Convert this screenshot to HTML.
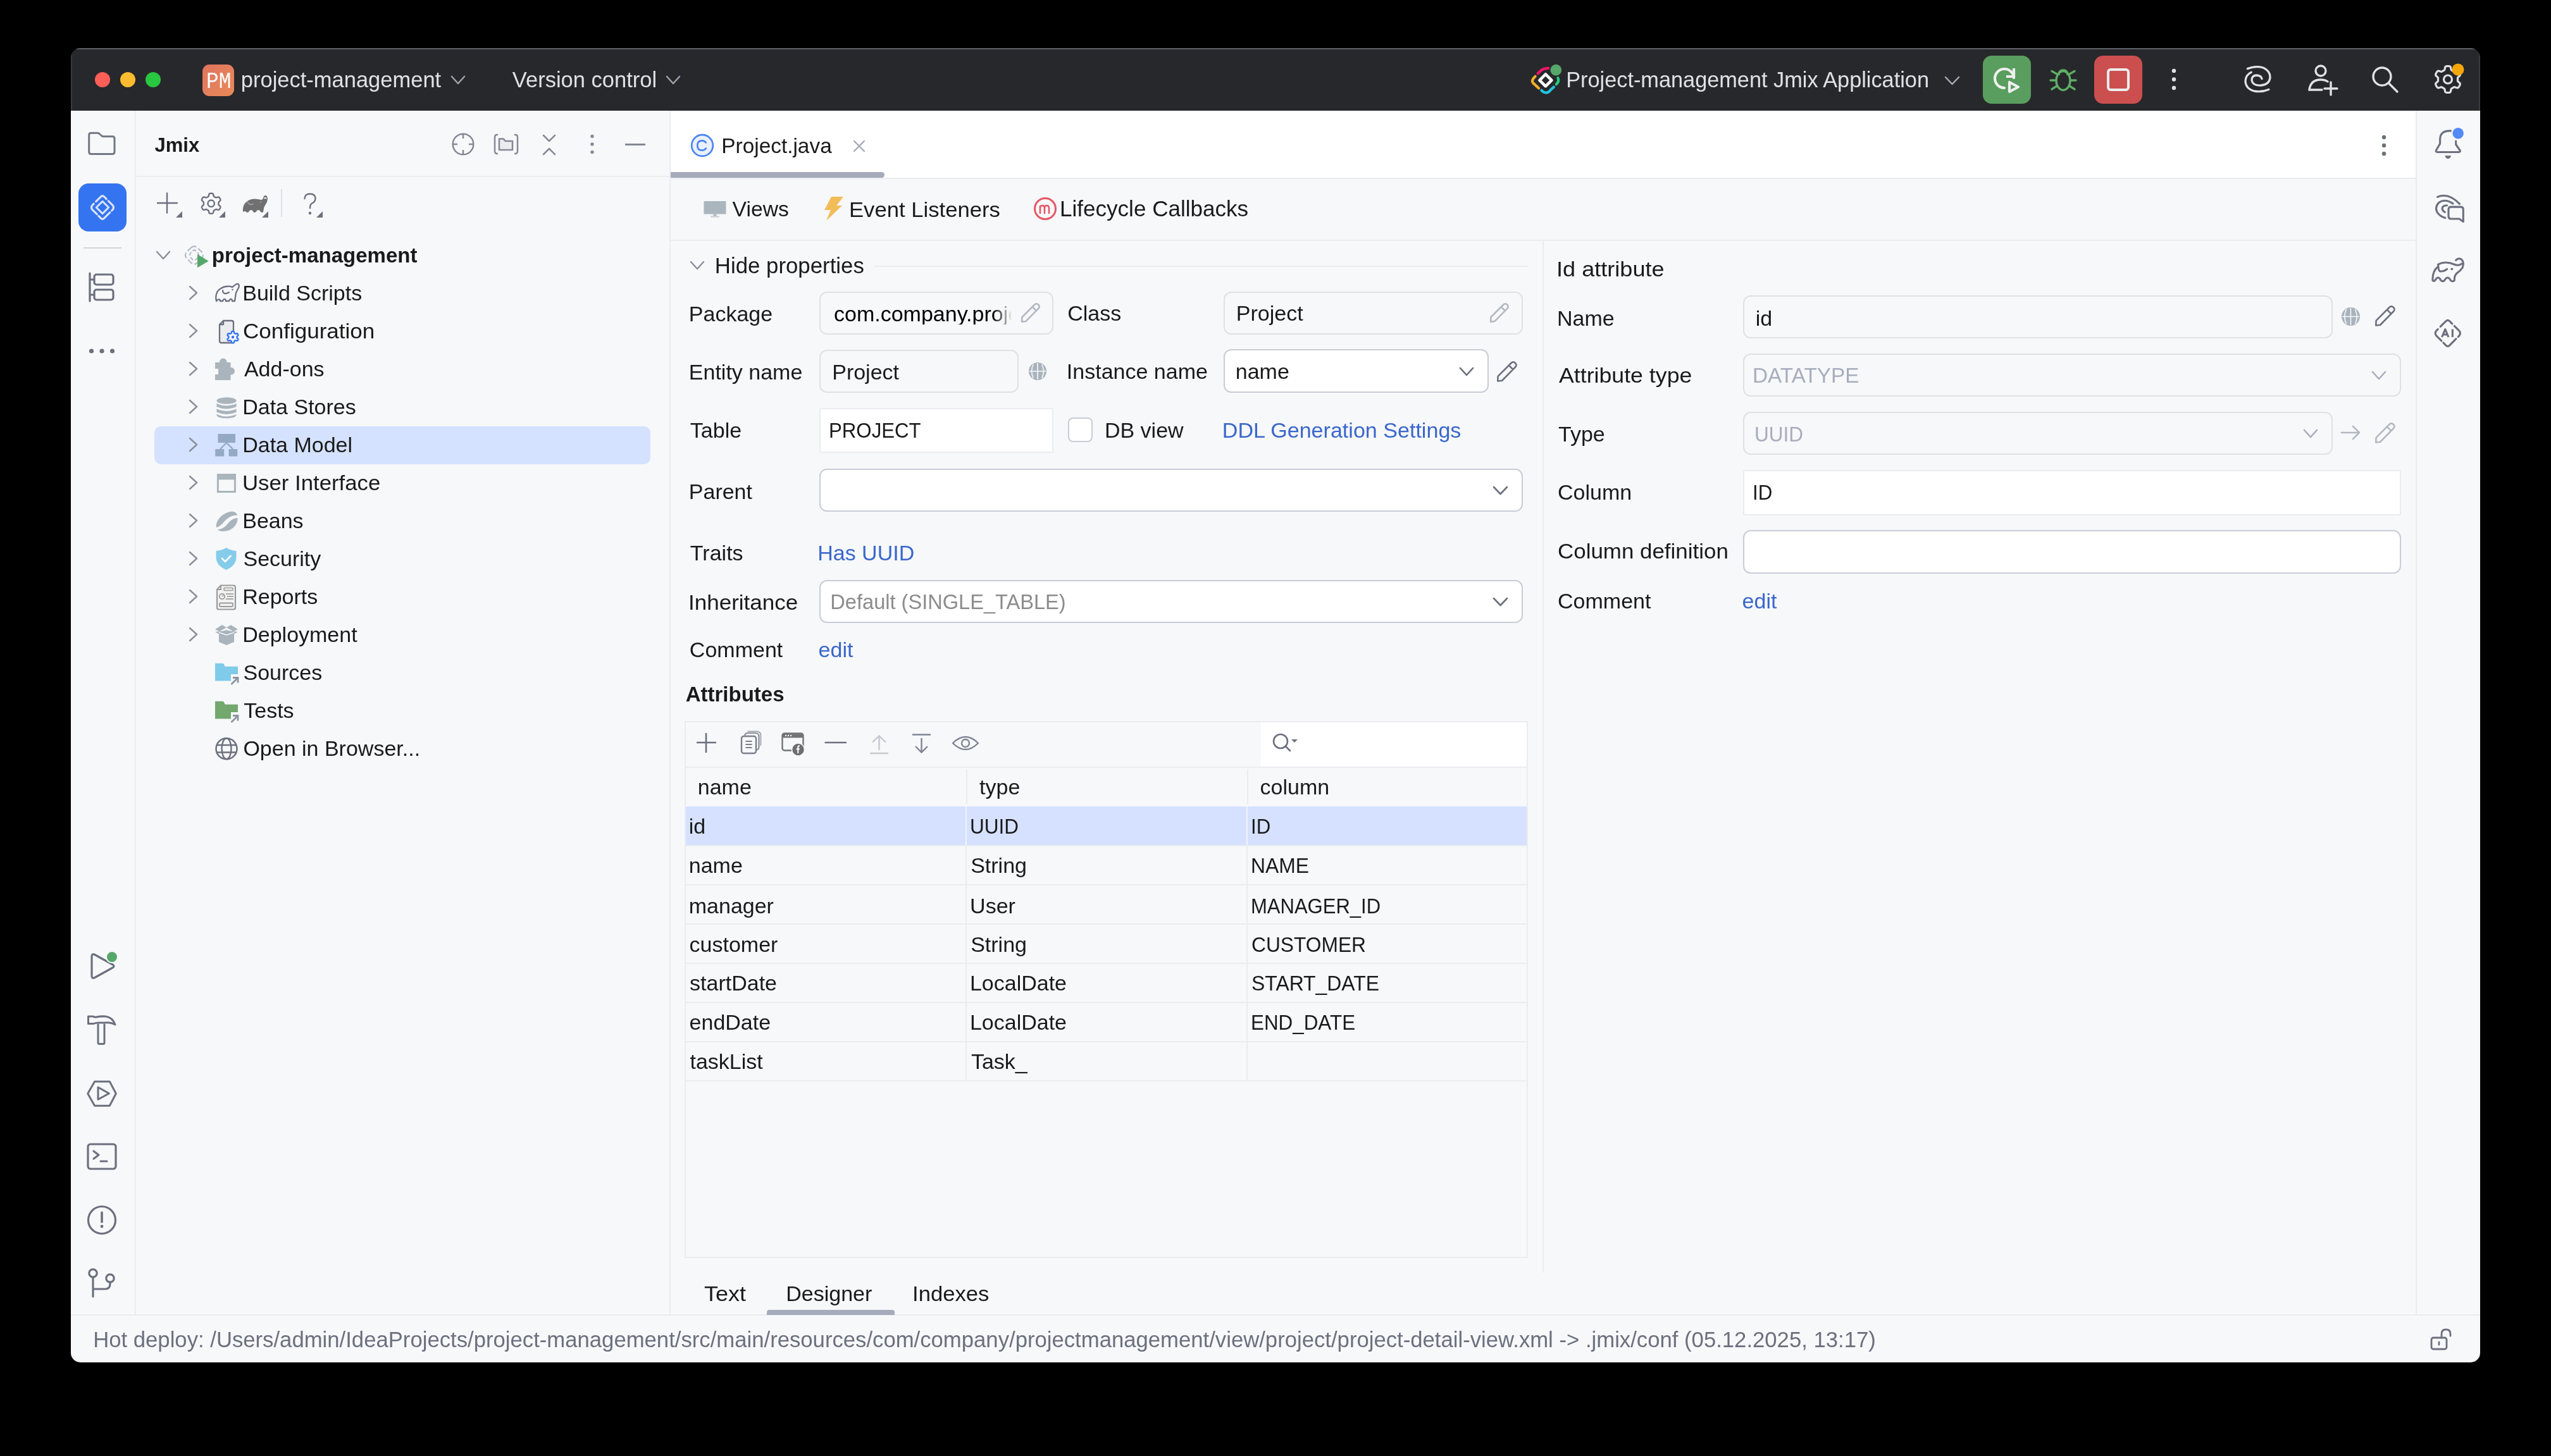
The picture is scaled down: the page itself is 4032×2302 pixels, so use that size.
<!DOCTYPE html>
<html><head><meta charset="utf-8"><style>
html,body{margin:0;padding:0;background:#000;width:4032px;height:2302px;overflow:hidden}
#w{position:absolute;left:0;top:0;width:4032px;height:2302px;clip-path:inset(76px 112px 148px 112px round 15px);will-change:transform}
#w div{position:absolute}
.t{white-space:nowrap;font-family:"Liberation Sans", sans-serif}
</style></head><body><div id="w">
<div style="left:112px;top:76px;width:3808px;height:2078px;background:#F7F8FA;"></div>
<div style="left:112px;top:76px;width:3808px;height:99px;background:#27282C;"></div>
<div style="left:112px;top:76px;width:3808px;height:2px;background:#606166;"></div>
<div style="left:112px;top:76px;width:2px;height:99px;background:#3A3B40;"></div>
<div style="left:3918px;top:76px;width:2px;height:99px;background:#3A3B40;"></div>
<div style="left:213px;top:175px;width:2px;height:1904px;background:#EBECF0;"></div>
<div style="left:215px;top:278px;width:843px;height:2px;background:#EBECF0;"></div>
<div style="left:1058px;top:175px;width:2px;height:1904px;background:#EBECF0;"></div>
<div style="left:3818px;top:175px;width:2px;height:1904px;background:#EBECF0;"></div>
<div style="left:1060px;top:175px;width:2758px;height:106px;background:#FFFFFF;"></div>
<div style="left:1060px;top:281px;width:2758px;height:2px;background:#EBECF0;"></div>
<div style="left:1060px;top:379px;width:2758px;height:2px;background:#EBECF0;"></div>
<div style="left:112px;top:2078px;width:3808px;height:2px;background:#EBECF0;"></div>
<div style="left:2438px;top:381px;width:2px;height:1631px;background:#EBECF0;"></div>
<svg style="position:absolute;left:148px;top:112px;" width="108" height="28" viewBox="0 0 108 28" fill="none"><circle cx="14" cy="14" r="12" fill="#FF5F57"/><circle cx="54" cy="14" r="12" fill="#FEBC2E"/><circle cx="94" cy="14" r="12" fill="#28C840"/></svg>
<div style="left:320px;top:102px;width:50px;height:50px;border-radius:11px;background:linear-gradient(135deg,#E0735F,#E88B58)"></div>
<div class="t" style="left:325.5px;top:111.5px;font-size:36px;line-height:35px;color:#FFFFFF;font-family:'Liberation Mono',monospace;transform:scaleX(0.91);transform-origin:0 0">PM</div>
<div class="t" style="left:380.79px;top:108.80px;font-size:34.5px;line-height:34.5px;color:#DFE1E5;font-weight:400;">project-management</div>
<svg style="position:absolute;left:712px;top:119px;" width="24" height="15" viewBox="0 0 24 15" fill="none"><path d="M2 2 L12.0 13 L22 2" stroke="#9DA0A8" stroke-width="2.6" stroke-linecap="round" stroke-linejoin="round"/></svg>
<div class="t" style="left:809.86px;top:108.80px;font-size:34.5px;line-height:34.5px;color:#DFE1E5;font-weight:400;">Version control</div>
<svg style="position:absolute;left:1052px;top:119px;" width="24" height="15" viewBox="0 0 24 15" fill="none"><path d="M2 2 L12.0 13 L22 2" stroke="#9DA0A8" stroke-width="2.6" stroke-linecap="round" stroke-linejoin="round"/></svg>
<svg style="position:absolute;left:2418px;top:100px;" width="52" height="52" viewBox="0 0 52 52" fill="none">
<path d="M24.9 17.3 L34.4 26.8 L24.9 36.3 L15.4 26.8 Z" stroke="#FFFFFF" stroke-width="4.6" stroke-linejoin="round"/>
<path d="M12.7 16.2 Q18 10.5 21.8 9 Q26 7.8 29.3 7.8" stroke="#F0176A" stroke-width="4.3" stroke-linecap="round"/>
<path d="M8.6 20.8 Q3.5 25 4 29 Q5 31.5 7 33 L14.1 39.5" stroke="#F4AF2A" stroke-width="4.3" stroke-linecap="round"/>
<path d="M18.4 42.9 Q22 47 27 46.5 Q30 46 33 42 L37.9 37.6" stroke="#22C3DB" stroke-width="4.3" stroke-linecap="round"/>
<path d="M44.4 23.2 Q47 28 41.8 33.3" stroke="#25CC7B" stroke-width="4.3" stroke-linecap="round"/>
<circle cx="41.3" cy="10.7" r="8.9" fill="#57A66A"/></svg>
<div class="t" style="left:2475.19px;top:108.97px;font-size:34.3px;line-height:34.3px;color:#DFE1E5;font-weight:400;">Project-management Jmix Application</div>
<svg style="position:absolute;left:3073px;top:120px;" width="25" height="15" viewBox="0 0 25 15" fill="none"><path d="M2 2 L12.5 13 L23 2" stroke="#A9ACB3" stroke-width="2.5" stroke-linecap="round" stroke-linejoin="round"/></svg>
<div style="left:3134px;top:88px;width:76px;height:76px;border-radius:14px;background:#599E5E"></div>
<svg style="position:absolute;left:3134px;top:88px;" width="76" height="76" viewBox="0 0 76 76" fill="none">
<path d="M34 51 A15 15 0 1 1 49 35" stroke="#EFEFEF" stroke-width="4.2" fill="none" stroke-linecap="round" transform="rotate(0)"/>
<path d="M49 20 V33 H37" stroke="#EFEFEF" stroke-width="4.2" fill="none" stroke-linejoin="miter"/>
<path d="M42 42 L42 57 L56 49.5 Z" stroke="#EFEFEF" stroke-width="4.2" fill="none" stroke-linejoin="round"/></svg>
<svg style="position:absolute;left:3238px;top:104px;" width="46" height="42" viewBox="0 0 46 42" fill="none">
<path d="M23 7 Q30 7 30 15 M23 7 Q16 7 16 15" stroke="#5FAD65" stroke-width="3.4"/>
<ellipse cx="23" cy="23.5" rx="11" ry="15" stroke="#5FAD65" stroke-width="3.4"/>
<path d="M13 13 L5 8.5 M12 23 H3 M13 32 L5 37 M33 13 L41 8.5 M34 23 H43 M33 32 L41 37" stroke="#5FAD65" stroke-width="3.4" stroke-linecap="round"/></svg>
<div style="left:3310px;top:88px;width:76px;height:76px;border-radius:14px;background:#CB4F4F"></div>
<div style="left:3330px;top:108px;width:28px;height:28px;border:4px solid #EDEDED;border-radius:6px"></div>
<svg style="position:absolute;left:3428px;top:104px;" width="16" height="44" viewBox="0 0 16 44" fill="none"><circle cx="8" cy="8" r="3.2" fill="#DFE1E5"/><circle cx="8" cy="21.5" r="3.2" fill="#DFE1E5"/><circle cx="8" cy="35" r="3.2" fill="#DFE1E5"/></svg>
<svg style="position:absolute;left:3545px;top:104px;" width="48" height="44" viewBox="0 0 48 44" fill="none">
<path d="M7.4 4.6 Q20 -0.5 32 3 Q43.5 8 43 19 Q41.5 30 28 31 Q15.5 31.5 14 23 Q14 15 22 15 Q29 15.5 30 20.5" stroke="#DFE1E5" stroke-width="3.3" stroke-linecap="round" fill="none"/>
<path d="M40.9 37.4 Q30 42 18 40 Q4.5 36.5 4 24 Q4.5 14.5 13.3 10.3" stroke="#DFE1E5" stroke-width="3.3" stroke-linecap="round" fill="none"/></svg>
<svg style="position:absolute;left:3646px;top:100px;" width="52" height="52" viewBox="0 0 52 52" fill="none">
<circle cx="22" cy="12" r="8" stroke="#DFE1E5" stroke-width="3.4"/>
<path d="M4 42 Q6 26 22 26 Q29 26 33 29" stroke="#DFE1E5" stroke-width="3.4" stroke-linecap="round"/>
<path d="M4 42 H24 M38 30 V50 M28 40 H48" stroke="#DFE1E5" stroke-width="3.4" stroke-linecap="round"/></svg>
<svg style="position:absolute;left:3746px;top:102px;" width="48" height="48" viewBox="0 0 48 48" fill="none"><circle cx="19" cy="19" r="14" stroke="#DFE1E5" stroke-width="3.4"/><path d="M29.5 29.5 L43 43" stroke="#DFE1E5" stroke-width="3.4" stroke-linecap="round"/></svg>
<svg style="position:absolute;left:3844px;top:100px;" width="50" height="50" viewBox="0 0 50 50" fill="none"><path d="M40.50 25.50 L40.50 25.91 L40.49 26.31 L40.48 26.72 L40.47 27.13 L40.49 27.54 L40.55 27.96 L40.72 28.41 L41.08 28.92 L41.74 29.52 L42.63 30.22 L43.49 30.98 L44.08 31.70 L44.34 32.35 L44.38 32.94 L44.29 33.49 L44.13 34.02 L43.93 34.53 L43.70 35.03 L43.45 35.52 L43.19 36.00 L42.90 36.47 L42.60 36.93 L42.28 37.38 L41.94 37.81 L41.56 38.21 L41.13 38.56 L40.60 38.82 L39.91 38.92 L38.99 38.78 L37.90 38.40 L36.85 37.99 L36.00 37.72 L35.38 37.65 L34.91 37.73 L34.51 37.89 L34.15 38.09 L33.79 38.30 L33.45 38.51 L33.10 38.72 L32.75 38.92 L32.40 39.12 L32.04 39.32 L31.68 39.51 L31.33 39.71 L30.98 39.93 L30.64 40.20 L30.34 40.57 L30.08 41.14 L29.89 42.00 L29.72 43.13 L29.50 44.25 L29.17 45.12 L28.74 45.67 L28.25 46.00 L27.73 46.20 L27.19 46.33 L26.65 46.41 L26.10 46.46 L25.55 46.49 L25.00 46.50 L24.45 46.49 L23.90 46.46 L23.35 46.41 L22.81 46.33 L22.27 46.20 L21.75 46.00 L21.26 45.67 L20.83 45.12 L20.50 44.25 L20.28 43.13 L20.11 42.00 L19.92 41.14 L19.66 40.57 L19.36 40.20 L19.02 39.93 L18.67 39.71 L18.32 39.51 L17.96 39.32 L17.60 39.12 L17.25 38.92 L16.90 38.72 L16.55 38.51 L16.21 38.30 L15.85 38.09 L15.49 37.89 L15.09 37.73 L14.62 37.65 L14.00 37.72 L13.15 37.99 L12.10 38.40 L11.01 38.78 L10.09 38.92 L9.40 38.82 L8.87 38.56 L8.44 38.21 L8.06 37.81 L7.72 37.38 L7.40 36.93 L7.10 36.47 L6.81 36.00 L6.55 35.52 L6.30 35.03 L6.07 34.53 L5.87 34.02 L5.71 33.49 L5.62 32.94 L5.66 32.35 L5.92 31.70 L6.51 30.98 L7.37 30.22 L8.26 29.52 L8.92 28.92 L9.28 28.41 L9.45 27.96 L9.51 27.54 L9.53 27.13 L9.52 26.72 L9.51 26.31 L9.50 25.91 L9.50 25.50 L9.50 25.09 L9.51 24.69 L9.52 24.28 L9.53 23.87 L9.51 23.46 L9.45 23.04 L9.28 22.59 L8.92 22.08 L8.26 21.48 L7.37 20.78 L6.51 20.02 L5.92 19.30 L5.66 18.65 L5.62 18.06 L5.71 17.51 L5.87 16.98 L6.07 16.47 L6.30 15.97 L6.55 15.48 L6.81 15.00 L7.10 14.53 L7.40 14.07 L7.72 13.62 L8.06 13.19 L8.44 12.79 L8.87 12.44 L9.40 12.18 L10.09 12.08 L11.01 12.22 L12.10 12.60 L13.15 13.01 L14.00 13.28 L14.62 13.35 L15.09 13.27 L15.49 13.11 L15.85 12.91 L16.21 12.70 L16.55 12.49 L16.90 12.28 L17.25 12.08 L17.60 11.88 L17.96 11.68 L18.32 11.49 L18.67 11.29 L19.02 11.07 L19.36 10.80 L19.66 10.43 L19.92 9.86 L20.11 9.00 L20.28 7.87 L20.50 6.75 L20.83 5.88 L21.26 5.33 L21.75 5.00 L22.27 4.80 L22.81 4.67 L23.35 4.59 L23.90 4.54 L24.45 4.51 L25.00 4.50 L25.55 4.51 L26.10 4.54 L26.65 4.59 L27.19 4.67 L27.73 4.80 L28.25 5.00 L28.74 5.33 L29.17 5.88 L29.50 6.75 L29.72 7.87 L29.89 9.00 L30.08 9.86 L30.34 10.43 L30.64 10.80 L30.98 11.07 L31.33 11.29 L31.68 11.49 L32.04 11.68 L32.40 11.88 L32.75 12.08 L33.10 12.28 L33.45 12.49 L33.79 12.70 L34.15 12.91 L34.51 13.11 L34.91 13.27 L35.38 13.35 L36.00 13.28 L36.85 13.01 L37.90 12.60 L38.99 12.22 L39.91 12.08 L40.60 12.18 L41.13 12.44 L41.56 12.79 L41.94 13.19 L42.28 13.62 L42.60 14.07 L42.90 14.53 L43.19 15.00 L43.45 15.48 L43.70 15.97 L43.93 16.47 L44.13 16.98 L44.29 17.51 L44.38 18.06 L44.34 18.65 L44.08 19.30 L43.49 20.02 L42.63 20.78 L41.74 21.48 L41.08 22.08 L40.72 22.59 L40.55 23.04 L40.49 23.46 L40.47 23.87 L40.48 24.28 L40.49 24.69 L40.50 25.09 Z" stroke="#DFE1E5" stroke-width="3.2" stroke-linejoin="round"/><circle cx="25" cy="25.5" r="6.5" stroke="#DFE1E5" stroke-width="3.2"/></svg>
<svg style="position:absolute;left:3874px;top:99px;" width="22" height="22" viewBox="0 0 22 22" fill="none"><circle cx="11" cy="11" r="9.5" fill="#F5A70A"/></svg>
<svg style="position:absolute;left:136px;top:206px;" width="50" height="42" viewBox="0 0 50 42" fill="none"><path d="M4.7 7.5 Q4.7 4.2 8 4.2 H18 Q19.5 4.2 20.5 5 L25 9 Q26 9.8 27.5 9.8 H41.7 Q45 9.8 45 13 V34.2 Q45 37.5 41.7 37.5 H8 Q4.7 37.5 4.7 34.2 Z" stroke="#727784" stroke-width="3" stroke-linejoin="round"/></svg>
<div style="left:124px;top:290px;width:76px;height:76px;border-radius:16px;background:#3574F0"></div>
<svg style="position:absolute;left:124px;top:290px;" width="76" height="76" viewBox="0 0 76 76" fill="none">
<path d="M38 28.3 L47.7 38 L38 47.7 L28.3 38 Z" stroke="#D9E4FD" stroke-width="3" stroke-linejoin="round"/>
<path transform="translate(38 38) scale(0.89) translate(-23.8 -24.9)" d="M12.2 14.4 L21 5.7 Q23.8 3 26.6 5.7 L30.8 9.9 M34.3 13.4 L42 21.1 Q44.8 24.9 42 28.7 L40.2 30.5 M37 33.7 L26.6 44.1 Q23.8 46.9 21 44.1 L16.8 39.9 M13.9 36.9 L5.6 28.7 Q2.8 24.9 5.6 21.1 L8.3 18.4" stroke="#D9E4FD" stroke-width="3.5" stroke-linecap="round" stroke-linejoin="round"/></svg>
<div style="left:132px;top:391px;width:60px;height:2px;background:#D3D5DB;"></div>
<svg style="position:absolute;left:136px;top:428px;" width="50" height="54" viewBox="0 0 50 54" fill="none">
<path d="M6 4 V48" stroke="#6C707E" stroke-width="3.2" stroke-linecap="round"/>
<path d="M6 14 H13 M6 38 H13" stroke="#6C707E" stroke-width="3.2"/>
<rect x="13" y="6" width="30" height="16" rx="3.5" stroke="#6C707E" stroke-width="3.2"/>
<rect x="13" y="30" width="30" height="16" rx="3.5" stroke="#6C707E" stroke-width="3.2"/></svg>
<svg style="position:absolute;left:136px;top:548px;" width="50" height="14" viewBox="0 0 50 14" fill="none"><circle cx="8.5" cy="7" r="3.6" fill="#6C707E"/><circle cx="25" cy="7" r="3.6" fill="#6C707E"/><circle cx="41.5" cy="7" r="3.6" fill="#6C707E"/></svg>
<svg style="position:absolute;left:136px;top:1500px;" width="52" height="54" viewBox="0 0 52 54" fill="none"><path d="M9 12 Q9 7 14 9.5 L42 25 Q46 27.5 42 30 L14 45.5 Q9 48 9 43 Z" stroke="#6C707E" stroke-width="3.2" stroke-linejoin="round"/><circle cx="41" cy="13" r="9" fill="#55A76A" stroke="#F7F8FA" stroke-width="2"/></svg>
<svg style="position:absolute;left:134px;top:1600px;" width="52" height="56" viewBox="0 0 52 56" fill="none"><path d="M5.5 7 H13 Q15 8.5 18 8 Q25 6.5 33 7 Q44 8.5 48 20 Q41 16 31 17 H22 Q17 17 14 18.5 H5.5 Z" stroke="#6C707E" stroke-width="3" stroke-linejoin="round"/><path d="M21 18.5 V48.5 Q21 50.5 23 50.5 H29 Q31 50.5 31 48.5 V18.5" stroke="#6C707E" stroke-width="3" stroke-linejoin="round"/></svg>
<svg style="position:absolute;left:134px;top:1704px;" width="54" height="50" viewBox="0 0 54 50" fill="none"><path d="M15.6 5.9 H39.3 L49.3 25 L39.3 44.2 H15.6 L4.7 25 Z" stroke="#6C707E" stroke-width="3" stroke-linejoin="round"/><path d="M21 15 V34.2 L38.4 24.7 Z" stroke="#6C707E" stroke-width="3" stroke-linejoin="round"/></svg>
<svg style="position:absolute;left:136px;top:1806px;" width="50" height="46" viewBox="0 0 50 46" fill="none"><rect x="3" y="3" width="44" height="39" rx="4" stroke="#6C707E" stroke-width="3.2"/><path d="M12 14 L20 20 L12 26 M23 30 H33" stroke="#6C707E" stroke-width="3.2" stroke-linecap="round" stroke-linejoin="round"/></svg>
<svg style="position:absolute;left:136px;top:1904px;" width="50" height="50" viewBox="0 0 50 50" fill="none"><circle cx="25" cy="25" r="21.5" stroke="#6C707E" stroke-width="3.2"/><path d="M25 13 V28" stroke="#6C707E" stroke-width="3.6" stroke-linecap="round"/><circle cx="25" cy="35" r="2.4" fill="#6C707E"/></svg>
<svg style="position:absolute;left:136px;top:2004px;" width="50" height="50" viewBox="0 0 50 50" fill="none"><circle cx="11" cy="9" r="6.2" stroke="#6C707E" stroke-width="3.2"/><circle cx="38" cy="17" r="6.2" stroke="#6C707E" stroke-width="3.2"/><path d="M11 15.5 V46 M11 34 H30 Q38 34 38 26 V23" stroke="#6C707E" stroke-width="3.2" stroke-linecap="round"/></svg>
<div class="t" style="left:244.53px;top:213.76px;font-size:31px;line-height:31px;color:#1A1A1A;font-weight:700;">Jmix</div>
<svg style="position:absolute;left:712px;top:208px;" width="40" height="40" viewBox="0 0 40 40" fill="none"><circle cx="20" cy="20" r="16.3" stroke="#858995" stroke-width="2.5"/><path d="M20 3.5 V11 M20 29 V36.5 M3.5 20 H11 M29 20 H36.5" stroke="#858995" stroke-width="2.5"/></svg>
<svg style="position:absolute;left:779px;top:210px;" width="42" height="38" viewBox="0 0 42 38" fill="none"><path d="M7 3 Q3 3 3 7 V29 Q3 33 7 33 M35 3 Q39 3 39 7 V29 Q39 33 35 33" stroke="#858995" stroke-width="2.5" stroke-linecap="round"/><path d="M10 9.5 H16.5 L20 13 H31 V27 H10 Z" fill="#EBECF0" stroke="#858995" stroke-width="2.5" stroke-linejoin="round"/></svg>
<svg style="position:absolute;left:855px;top:210px;" width="26" height="38" viewBox="0 0 26 38" fill="none"><path d="M4 4 L13 13 L22 4 M4 34 L13 25 L22 34" stroke="#858995" stroke-width="2.5" stroke-linecap="round" stroke-linejoin="round"/></svg>
<svg style="position:absolute;left:928px;top:208px;" width="16" height="40" viewBox="0 0 16 40" fill="none"><circle cx="8" cy="7.5" r="2.7" fill="#858995"/><circle cx="8" cy="20" r="2.7" fill="#858995"/><circle cx="8" cy="32.5" r="2.7" fill="#858995"/></svg>
<div style="left:988px;top:227px;width:32px;height:3px;background:#858995;"></div>
<svg style="position:absolute;left:246px;top:302px;" width="40" height="40" viewBox="0 0 40 40" fill="none"><path d="M18 3.5 V34.5 M3 19 H34" stroke="#6C707E" stroke-width="2.4" stroke-linecap="round"/></svg>
<svg style="position:absolute;left:278px;top:334px;" width="10" height="10" viewBox="0 0 10 10" fill="none"><path d="M10 0 L10 10 L0 10 Z" fill="#6C707E"/></svg>
<svg style="position:absolute;left:316px;top:302px;" width="38" height="40" viewBox="0 0 38 40" fill="none"><path d="M29.50 19.70 L29.50 20.01 L29.49 20.32 L29.48 20.63 L29.48 20.94 L29.49 21.25 L29.54 21.57 L29.67 21.92 L29.95 22.30 L30.45 22.76 L31.13 23.30 L31.79 23.87 L32.23 24.42 L32.43 24.92 L32.46 25.37 L32.40 25.79 L32.28 26.19 L32.12 26.58 L31.95 26.96 L31.76 27.33 L31.56 27.70 L31.34 28.06 L31.11 28.41 L30.87 28.75 L30.61 29.08 L30.32 29.38 L29.99 29.65 L29.59 29.85 L29.06 29.92 L28.36 29.81 L27.53 29.53 L26.72 29.21 L26.08 29.00 L25.60 28.95 L25.24 29.01 L24.94 29.13 L24.66 29.28 L24.40 29.44 L24.13 29.60 L23.87 29.76 L23.60 29.92 L23.33 30.07 L23.06 30.22 L22.79 30.37 L22.52 30.52 L22.25 30.69 L22.00 30.89 L21.76 31.17 L21.57 31.61 L21.42 32.27 L21.30 33.13 L21.13 33.99 L20.88 34.65 L20.55 35.07 L20.17 35.32 L19.78 35.47 L19.37 35.57 L18.95 35.63 L18.54 35.67 L18.12 35.69 L17.70 35.70 L17.28 35.69 L16.86 35.67 L16.45 35.63 L16.03 35.57 L15.62 35.47 L15.23 35.32 L14.85 35.07 L14.52 34.65 L14.27 33.99 L14.10 33.13 L13.98 32.27 L13.83 31.61 L13.64 31.17 L13.40 30.89 L13.15 30.69 L12.88 30.52 L12.61 30.37 L12.34 30.22 L12.07 30.07 L11.80 29.92 L11.53 29.76 L11.27 29.60 L11.00 29.44 L10.74 29.28 L10.46 29.13 L10.16 29.01 L9.80 28.95 L9.32 29.00 L8.68 29.21 L7.87 29.53 L7.04 29.81 L6.34 29.92 L5.81 29.85 L5.41 29.65 L5.08 29.38 L4.79 29.08 L4.53 28.75 L4.29 28.41 L4.06 28.06 L3.84 27.70 L3.64 27.33 L3.45 26.96 L3.28 26.58 L3.12 26.19 L3.00 25.79 L2.94 25.37 L2.97 24.92 L3.17 24.42 L3.61 23.87 L4.27 23.30 L4.95 22.76 L5.45 22.30 L5.73 21.92 L5.86 21.57 L5.91 21.25 L5.92 20.94 L5.92 20.63 L5.91 20.32 L5.90 20.01 L5.90 19.70 L5.90 19.39 L5.91 19.08 L5.92 18.77 L5.92 18.46 L5.91 18.15 L5.86 17.83 L5.73 17.48 L5.45 17.10 L4.95 16.64 L4.27 16.10 L3.61 15.53 L3.17 14.98 L2.97 14.48 L2.94 14.03 L3.00 13.61 L3.12 13.21 L3.28 12.82 L3.45 12.44 L3.64 12.07 L3.84 11.70 L4.06 11.34 L4.29 10.99 L4.53 10.65 L4.79 10.32 L5.08 10.02 L5.41 9.75 L5.81 9.55 L6.34 9.48 L7.04 9.59 L7.87 9.87 L8.68 10.19 L9.32 10.40 L9.80 10.45 L10.16 10.39 L10.46 10.27 L10.74 10.12 L11.00 9.96 L11.27 9.80 L11.53 9.64 L11.80 9.48 L12.07 9.33 L12.34 9.18 L12.61 9.03 L12.88 8.88 L13.15 8.71 L13.40 8.51 L13.64 8.23 L13.83 7.79 L13.98 7.13 L14.10 6.27 L14.27 5.41 L14.52 4.75 L14.85 4.33 L15.23 4.08 L15.62 3.93 L16.03 3.83 L16.45 3.77 L16.86 3.73 L17.28 3.71 L17.70 3.70 L18.12 3.71 L18.54 3.73 L18.95 3.77 L19.37 3.83 L19.78 3.93 L20.17 4.08 L20.55 4.33 L20.88 4.75 L21.13 5.41 L21.30 6.27 L21.42 7.13 L21.57 7.79 L21.76 8.23 L22.00 8.51 L22.25 8.71 L22.52 8.88 L22.79 9.03 L23.06 9.18 L23.33 9.33 L23.60 9.48 L23.87 9.64 L24.13 9.80 L24.40 9.96 L24.66 10.12 L24.94 10.27 L25.24 10.39 L25.60 10.45 L26.08 10.40 L26.72 10.19 L27.53 9.87 L28.36 9.59 L29.06 9.48 L29.59 9.55 L29.99 9.75 L30.32 10.02 L30.61 10.32 L30.87 10.65 L31.11 10.99 L31.34 11.34 L31.56 11.70 L31.76 12.07 L31.95 12.44 L32.12 12.82 L32.28 13.21 L32.40 13.61 L32.46 14.03 L32.43 14.48 L32.23 14.98 L31.79 15.53 L31.13 16.10 L30.45 16.64 L29.95 17.10 L29.67 17.48 L29.54 17.83 L29.49 18.15 L29.48 18.46 L29.48 18.77 L29.49 19.08 L29.50 19.39 Z" stroke="#6C707E" stroke-width="2.4" stroke-linejoin="round"/><circle cx="17.7" cy="19.7" r="5.2" stroke="#6C707E" stroke-width="2.4"/></svg>
<svg style="position:absolute;left:346px;top:334px;" width="10" height="10" viewBox="0 0 10 10" fill="none"><path d="M10 0 L10 10 L0 10 Z" fill="#6C707E"/></svg>
<svg style="position:absolute;left:382px;top:306px;" width="48" height="34" viewBox="0 0 48 34" fill="none"><path d="M2 29 Q1 19 7 13.5 Q13 8 22 8.5 Q28 9 31 10 Q33 10.5 34 7 Q35 2.5 38 3 Q41 4 41 9 Q40.5 14 37 18.5 Q34.5 22 34.5 27 L34 29 Q32 31 30 29 Q28.5 26 26.5 26 Q24 26 22.5 29 Q20.5 31 18.5 29 Q17 26 15 26 Q12.5 26 11 29 Q9 31 7 29 Q5 27 2 29 Z" fill="#707070"/><path d="M36 7.5 Q37.5 5.5 38.8 7.8" stroke="#F7F8FA" stroke-width="1.7" stroke-linecap="round"/><path d="M9 13 Q12 19 18 16.5" stroke="#A8A8A8" stroke-width="1.5" stroke-linecap="round"/><circle cx="30" cy="13.5" r="1" fill="#A8A8A8"/></svg>
<svg style="position:absolute;left:414px;top:334px;" width="10" height="10" viewBox="0 0 10 10" fill="none"><path d="M10 0 L10 10 L0 10 Z" fill="#6C707E"/></svg>
<div style="left:444px;top:299px;width:2px;height:44px;background:#DFE1E5;"></div>
<svg style="position:absolute;left:476px;top:302px;" width="30" height="40" viewBox="0 0 30 40" fill="none"><path d="M5.5 12 Q5.5 4.5 14 4.5 Q22.5 4.5 22.5 12 Q22.5 17 16.5 20 Q14 21.5 14 27" stroke="#6C707E" stroke-width="2.4" stroke-linecap="round"/><circle cx="14" cy="35" r="2.2" fill="#6C707E"/></svg>
<svg style="position:absolute;left:500px;top:334px;" width="10" height="10" viewBox="0 0 10 10" fill="none"><path d="M10 0 L10 10 L0 10 Z" fill="#6C707E"/></svg>
<div style="left:244px;top:674px;width:784px;height:60px;border-radius:10px;background:#D4E2FF"></div>
<svg style="position:absolute;left:246px;top:396px;" width="24" height="15" viewBox="0 0 24 15" fill="none"><path d="M2 2 L12.0 13 L22 2" stroke="#8A8E99" stroke-width="2.4" stroke-linecap="round" stroke-linejoin="round"/></svg>
<svg style="position:absolute;left:288px;top:386px;" width="46" height="40" viewBox="0 0 46 40" fill="none">
<path d="M14 5.5 Q19 1.5 24 5.5 L31 12.5 Q35 17.5 31 22.5 L24 29.5 Q19 33.5 14 29.5 L7 22.5 Q3 17.5 7 12.5 Z" stroke="#B8BEC7" stroke-width="2.3" stroke-dasharray="9 3.5"/>
<path d="M16.5 10.5 Q19 8.5 21.5 10.5 L25 14 Q27 17.5 25 21 L21.5 24.5 Q19 26.5 16.5 24.5 L13 21 Q11 17.5 13 14 Z" stroke="#B8BEC7" stroke-width="2.2" stroke-dasharray="6 3"/>
<path d="M24 16 L41.6 26.7 L24 37.2 Z" fill="#55A76A"/></svg>
<div class="t" style="left:334.82px;top:387.07px;font-size:33px;line-height:33px;color:#1A1A1A;font-weight:700;">project-management</div>
<svg style="position:absolute;left:298px;top:451px;" width="15" height="24" viewBox="0 0 15 24" fill="none"><path d="M2 2 L13 12.0 L2 22" stroke="#8A8E99" stroke-width="2.4" stroke-linecap="round" stroke-linejoin="round"/></svg>
<div class="t" style="left:383.21px;top:446.22px;font-size:34px;line-height:34px;color:#1A1A1A;font-weight:400;">Build Scripts</div>
<svg style="position:absolute;left:298px;top:511px;" width="15" height="24" viewBox="0 0 15 24" fill="none"><path d="M2 2 L13 12.0 L2 22" stroke="#8A8E99" stroke-width="2.4" stroke-linecap="round" stroke-linejoin="round"/></svg>
<div class="t" style="left:384.21px;top:506.22px;font-size:34px;line-height:34px;color:#1A1A1A;font-weight:400;transform:scaleX(1.03);transform-origin:0 0;">Configuration</div>
<svg style="position:absolute;left:298px;top:571px;" width="15" height="24" viewBox="0 0 15 24" fill="none"><path d="M2 2 L13 12.0 L2 22" stroke="#8A8E99" stroke-width="2.4" stroke-linecap="round" stroke-linejoin="round"/></svg>
<div class="t" style="left:385.93px;top:566.22px;font-size:34px;line-height:34px;color:#1A1A1A;font-weight:400;">Add-ons</div>
<svg style="position:absolute;left:298px;top:631px;" width="15" height="24" viewBox="0 0 15 24" fill="none"><path d="M2 2 L13 12.0 L2 22" stroke="#8A8E99" stroke-width="2.4" stroke-linecap="round" stroke-linejoin="round"/></svg>
<div class="t" style="left:383.21px;top:626.22px;font-size:34px;line-height:34px;color:#1A1A1A;font-weight:400;">Data Stores</div>
<svg style="position:absolute;left:298px;top:691px;" width="15" height="24" viewBox="0 0 15 24" fill="none"><path d="M2 2 L13 12.0 L2 22" stroke="#8A8E99" stroke-width="2.4" stroke-linecap="round" stroke-linejoin="round"/></svg>
<div class="t" style="left:383.21px;top:686.22px;font-size:34px;line-height:34px;color:#1A1A1A;font-weight:400;">Data Model</div>
<svg style="position:absolute;left:298px;top:751px;" width="15" height="24" viewBox="0 0 15 24" fill="none"><path d="M2 2 L13 12.0 L2 22" stroke="#8A8E99" stroke-width="2.4" stroke-linecap="round" stroke-linejoin="round"/></svg>
<div class="t" style="left:383.32px;top:746.22px;font-size:34px;line-height:34px;color:#1A1A1A;font-weight:400;transform:scaleX(1.022);transform-origin:0 0;">User Interface</div>
<svg style="position:absolute;left:298px;top:811px;" width="15" height="24" viewBox="0 0 15 24" fill="none"><path d="M2 2 L13 12.0 L2 22" stroke="#8A8E99" stroke-width="2.4" stroke-linecap="round" stroke-linejoin="round"/></svg>
<div class="t" style="left:383.21px;top:806.22px;font-size:34px;line-height:34px;color:#1A1A1A;font-weight:400;">Beans</div>
<svg style="position:absolute;left:298px;top:871px;" width="15" height="24" viewBox="0 0 15 24" fill="none"><path d="M2 2 L13 12.0 L2 22" stroke="#8A8E99" stroke-width="2.4" stroke-linecap="round" stroke-linejoin="round"/></svg>
<div class="t" style="left:384.47px;top:866.22px;font-size:34px;line-height:34px;color:#1A1A1A;font-weight:400;">Security</div>
<svg style="position:absolute;left:298px;top:931px;" width="15" height="24" viewBox="0 0 15 24" fill="none"><path d="M2 2 L13 12.0 L2 22" stroke="#8A8E99" stroke-width="2.4" stroke-linecap="round" stroke-linejoin="round"/></svg>
<div class="t" style="left:383.21px;top:926.22px;font-size:34px;line-height:34px;color:#1A1A1A;font-weight:400;">Reports</div>
<svg style="position:absolute;left:298px;top:991px;" width="15" height="24" viewBox="0 0 15 24" fill="none"><path d="M2 2 L13 12.0 L2 22" stroke="#8A8E99" stroke-width="2.4" stroke-linecap="round" stroke-linejoin="round"/></svg>
<div class="t" style="left:383.21px;top:986.22px;font-size:34px;line-height:34px;color:#1A1A1A;font-weight:400;">Deployment</div>
<div class="t" style="left:384.47px;top:1046.22px;font-size:34px;line-height:34px;color:#1A1A1A;font-weight:400;">Sources</div>
<div class="t" style="left:385.25px;top:1106.22px;font-size:34px;line-height:34px;color:#1A1A1A;font-weight:400;">Tests</div>
<div class="t" style="left:384.40px;top:1166.22px;font-size:34px;line-height:34px;color:#1A1A1A;font-weight:400;">Open in Browser...</div>
<svg style="position:absolute;left:339px;top:444px;" width="42" height="40" viewBox="0 0 42 40" fill="none"><path d="M3 32 C1 24 3 16 10 12 C16 8 24 8 28 10 C31 8 33 6 35 5 C38 4 40 7 38 11 L34 19 C33 24 33 28 32 32 L28 32 C28 29 26 28 24 30 L23 32 L18 32 C18 29 16 28 14 30 L13 32 L9 32 C9 29 6 28 3 32 Z" stroke="#6C707E" stroke-width="2.3" stroke-linejoin="round"/><path d="M13 15 C13 20 17 22 23 18" stroke="#6C707E" stroke-width="2.2" stroke-linecap="round"/><circle cx="28.5" cy="14" r="1.3" fill="#6C707E"/></svg>
<svg style="position:absolute;left:340px;top:504px;" width="42" height="42" viewBox="0 0 42 42" fill="none"><path d="M7 9 L13 3 H26 Q29 3 29 6 V35 Q29 38 26 38 H10 Q7 38 7 35 Z" fill="#EBECF0" stroke="#6C707E" stroke-width="2.3" stroke-linejoin="round"/><path d="M7 9 H13 V3" stroke="#6C707E" stroke-width="2.3" stroke-linejoin="round"/><path d="M34.60 29.00 L34.60 29.17 L34.60 29.35 L34.59 29.52 L34.59 29.69 L34.60 29.87 L34.63 30.05 L34.71 30.24 L34.89 30.46 L35.20 30.73 L35.63 31.04 L36.05 31.38 L36.33 31.71 L36.46 31.99 L36.48 32.26 L36.45 32.50 L36.38 32.73 L36.29 32.96 L36.19 33.17 L36.08 33.39 L35.97 33.60 L35.84 33.81 L35.71 34.01 L35.57 34.20 L35.42 34.39 L35.25 34.57 L35.06 34.72 L34.82 34.83 L34.51 34.86 L34.09 34.78 L33.59 34.59 L33.10 34.37 L32.71 34.24 L32.44 34.19 L32.23 34.22 L32.05 34.28 L31.90 34.36 L31.75 34.45 L31.60 34.54 L31.45 34.63 L31.30 34.72 L31.15 34.80 L31.00 34.88 L30.85 34.97 L30.70 35.05 L30.55 35.15 L30.41 35.27 L30.28 35.44 L30.18 35.70 L30.10 36.10 L30.04 36.63 L29.96 37.16 L29.82 37.56 L29.63 37.82 L29.42 37.97 L29.19 38.06 L28.96 38.12 L28.72 38.16 L28.48 38.18 L28.24 38.20 L28.00 38.20 L27.76 38.20 L27.52 38.18 L27.28 38.16 L27.04 38.12 L26.81 38.06 L26.58 37.97 L26.37 37.82 L26.18 37.56 L26.04 37.16 L25.96 36.63 L25.90 36.10 L25.82 35.70 L25.72 35.44 L25.59 35.27 L25.45 35.15 L25.30 35.05 L25.15 34.97 L25.00 34.88 L24.85 34.80 L24.70 34.72 L24.55 34.63 L24.40 34.54 L24.25 34.45 L24.10 34.36 L23.95 34.28 L23.77 34.22 L23.56 34.19 L23.29 34.24 L22.90 34.37 L22.41 34.59 L21.91 34.78 L21.49 34.86 L21.18 34.83 L20.94 34.72 L20.75 34.57 L20.58 34.39 L20.43 34.20 L20.29 34.01 L20.16 33.81 L20.03 33.60 L19.92 33.39 L19.81 33.17 L19.71 32.96 L19.62 32.73 L19.55 32.50 L19.52 32.26 L19.54 31.99 L19.67 31.71 L19.95 31.38 L20.37 31.04 L20.80 30.73 L21.11 30.46 L21.29 30.24 L21.37 30.05 L21.40 29.87 L21.41 29.69 L21.41 29.52 L21.40 29.35 L21.40 29.17 L21.40 29.00 L21.40 28.83 L21.40 28.65 L21.41 28.48 L21.41 28.31 L21.40 28.13 L21.37 27.95 L21.29 27.76 L21.11 27.54 L20.80 27.27 L20.37 26.96 L19.95 26.62 L19.67 26.29 L19.54 26.01 L19.52 25.74 L19.55 25.50 L19.62 25.27 L19.71 25.04 L19.81 24.83 L19.92 24.61 L20.03 24.40 L20.16 24.19 L20.29 23.99 L20.43 23.80 L20.58 23.61 L20.75 23.43 L20.94 23.28 L21.18 23.17 L21.49 23.14 L21.91 23.22 L22.41 23.41 L22.90 23.63 L23.29 23.76 L23.56 23.81 L23.77 23.78 L23.95 23.72 L24.10 23.64 L24.25 23.55 L24.40 23.46 L24.55 23.37 L24.70 23.28 L24.85 23.20 L25.00 23.12 L25.15 23.03 L25.30 22.95 L25.45 22.85 L25.59 22.73 L25.72 22.56 L25.82 22.30 L25.90 21.90 L25.96 21.37 L26.04 20.84 L26.18 20.44 L26.37 20.18 L26.58 20.03 L26.81 19.94 L27.04 19.88 L27.28 19.84 L27.52 19.82 L27.76 19.80 L28.00 19.80 L28.24 19.80 L28.48 19.82 L28.72 19.84 L28.96 19.88 L29.19 19.94 L29.42 20.03 L29.63 20.18 L29.82 20.44 L29.96 20.84 L30.04 21.37 L30.10 21.90 L30.18 22.30 L30.28 22.56 L30.41 22.73 L30.55 22.85 L30.70 22.95 L30.85 23.03 L31.00 23.12 L31.15 23.20 L31.30 23.28 L31.45 23.37 L31.60 23.46 L31.75 23.55 L31.90 23.64 L32.05 23.72 L32.23 23.78 L32.44 23.81 L32.71 23.76 L33.10 23.63 L33.59 23.41 L34.09 23.22 L34.51 23.14 L34.82 23.17 L35.06 23.28 L35.25 23.43 L35.42 23.61 L35.57 23.80 L35.71 23.99 L35.84 24.19 L35.97 24.40 L36.08 24.61 L36.19 24.83 L36.29 25.04 L36.38 25.27 L36.45 25.50 L36.48 25.74 L36.46 26.01 L36.33 26.29 L36.05 26.62 L35.63 26.96 L35.20 27.27 L34.89 27.54 L34.71 27.76 L34.63 27.95 L34.60 28.13 L34.59 28.31 L34.59 28.48 L34.60 28.65 L34.60 28.83 Z" fill="#F7F8FA" stroke="#3574F0" stroke-width="2.4" stroke-linejoin="round"/><circle cx="28" cy="29" r="2.2" fill="#3574F0"/></svg>
<svg style="position:absolute;left:340px;top:564px;" width="40" height="40" viewBox="0 0 40 40" fill="none"><path d="M0 9 H7 A5.8 5.8 0 1 1 18.5 9 H24.5 V17 A5.8 5.8 0 1 1 24.5 28.5 V37 H0 V28 H5 V19 H0 Z" fill="#A9B4BC"/></svg>
<svg style="position:absolute;left:340px;top:624px;" width="40" height="42" viewBox="0 0 40 42" fill="none"><ellipse cx="18" cy="9.5" rx="15.6" ry="5.3" fill="#A9B4BC"/><path d="M2.4 14 Q18 21 33.6 14 V19 Q18 26 2.4 19 Z M2.4 22.5 Q18 29.5 33.6 22.5 V27.5 Q18 34.5 2.4 27.5 Z M2.4 31 Q18 38 33.6 31 V32 Q33 37 18 37.5 Q3 37 2.4 32 Z" fill="#A9B4BC"/></svg>
<svg style="position:absolute;left:340px;top:684px;" width="40" height="40" viewBox="0 0 40 40" fill="none"><rect x="4.5" y="2" width="27.5" height="14" fill="#93A9C4"/><rect x="0.2" y="26" width="14" height="11.5" fill="#93A9C4"/><rect x="21.6" y="26" width="13.7" height="11.5" fill="#93A9C4"/><path d="M18 16 L8 26 M18 16 L28 26" stroke="#93A9C4" stroke-width="2.4"/></svg>
<svg style="position:absolute;left:340px;top:744px;" width="40" height="40" viewBox="0 0 40 40" fill="none"><rect x="4.4" y="6.5" width="27" height="27" stroke="#A9B4BC" stroke-width="3"/><rect x="3" y="5" width="30" height="9.4" fill="#A9B4BC"/></svg>
<svg style="position:absolute;left:340px;top:804px;" width="40" height="40" viewBox="0 0 40 40" fill="none"><path d="M2 30 C0 22 8 10 20 6 C28 3 35 6 35 11 C28 10 20 14 15 20 C10 26 6 29 2 30 Z" fill="#A9B4BC"/><path d="M4 33 C10 33 15 30 20 24 C25 18 30 15 35.5 15 C36 23 30 32 20 35 C12 37 6 36 4 33 Z" fill="#A9B4BC"/></svg>
<svg style="position:absolute;left:340px;top:864px;" width="40" height="40" viewBox="0 0 40 40" fill="none"><path d="M17.7 2 Q23 6 33.5 7 V17 Q33.5 30 17.7 37 Q1.5 30 1.5 17 V7 Q12 6 17.7 2 Z" fill="#85CCEA"/><path d="M11 19 L16 24 L24.5 15" stroke="#FFFFFF" stroke-width="2.6" stroke-linecap="round" stroke-linejoin="round"/></svg>
<svg style="position:absolute;left:340px;top:924px;" width="40" height="42" viewBox="0 0 40 42" fill="none"><path d="M3 8 L9 1.5 H29 Q32 1.5 32 4.5 V37 Q32 39.5 29 39.5 H6 Q3 39.5 3 37 Z" fill="#F2F2F2" stroke="#9A9A9A" stroke-width="2.2" stroke-linejoin="round"/><path d="M3 8 H9 V1.5" stroke="#9A9A9A" stroke-width="2"/><rect x="14" y="5.5" width="14" height="4" rx="1" stroke="#9A9A9A" stroke-width="1.6"/><path d="M17 15 H29 M19 19 H29 M17 23 H29" stroke="#A8A8A8" stroke-width="1.8"/><circle cx="11" cy="19" r="4.2" stroke="#9A9A9A" stroke-width="1.8"/><path d="M11 19 L14 16.5" stroke="#9A9A9A" stroke-width="1.4"/><rect x="7" y="29.5" width="21" height="5.5" rx="1.2" stroke="#9A9A9A" stroke-width="1.8"/></svg>
<svg style="position:absolute;left:340px;top:984px;" width="40" height="40" viewBox="0 0 40 40" fill="none"><path d="M6 16 L18 12 L30 16 V31 L18 36 L6 31 Z" fill="#A9B4BC"/><path d="M0 11 L11 4 L18 8 L7 14.5 Z M36 11 L25 4 L18 8 L29 14.5 Z M0 15 L7 19 L18 13 M36 15 L29 19 L18 13" fill="#A9B4BC"/><path d="M6 16 L18 20 L30 16" stroke="#F7F8FA" stroke-width="1.5"/></svg>
<svg style="position:absolute;left:340px;top:1044px;" width="40" height="40" viewBox="0 0 40 40" fill="none"><path d="M0 4.7 H11 Q13 4.7 14 6 L15.5 9.7 H36 V22 H25 V32.5 H0 Z" fill="#7FCBEA"/><path d="M25.5 38 L35 28.5 M28 27.5 H36 V35.5" stroke="#8C959E" stroke-width="2.8" stroke-linejoin="miter"/></svg>
<svg style="position:absolute;left:340px;top:1104px;" width="40" height="40" viewBox="0 0 40 40" fill="none"><path d="M0 4.7 H11 Q13 4.7 14 6 L15.5 9.7 H36 V22 H25 V32.5 H0 Z" fill="#72A86E"/><path d="M25.5 38 L35 28.5 M28 27.5 H36 V35.5" stroke="#8C959E" stroke-width="2.8" stroke-linejoin="miter"/></svg>
<svg style="position:absolute;left:340px;top:1164px;" width="40" height="40" viewBox="0 0 40 40" fill="none"><circle cx="18" cy="19.7" r="16.5" stroke="#6C707E" stroke-width="2.5"/><ellipse cx="18" cy="19.7" rx="7.5" ry="16.5" stroke="#6C707E" stroke-width="2.4"/><path d="M2.5 14 H33.5 M2.5 25.5 H33.5" stroke="#6C707E" stroke-width="2.4"/></svg>
<svg style="position:absolute;left:1090px;top:210px;" width="40" height="40" viewBox="0 0 40 40" fill="none"><circle cx="20" cy="20" r="16.8" fill="#E9F0FE" stroke="#4A84F3" stroke-width="2.7"/><path d="M25.8 15.5 Q23.5 12.3 19.8 12.3 Q12.3 12.3 12.3 20 Q12.3 27.7 19.8 27.7 Q23.5 27.7 25.8 24.5" stroke="#4A84F3" stroke-width="2.7" stroke-linecap="round"/></svg>
<div class="t" style="left:1140.26px;top:214.33px;font-size:33.4px;line-height:33.4px;color:#1A1A1A;font-weight:400;">Project.java</div>
<svg style="position:absolute;left:1347px;top:220px;" width="22" height="22" viewBox="0 0 22 22" fill="none"><path d="M3 3 L19 19 M19 3 L3 19" stroke="#A3A8B6" stroke-width="2.3" stroke-linecap="round"/></svg>
<div style="left:1060px;top:272px;width:338px;height:9px;border-radius:0 5px 5px 0;background:#A5ABBB"></div>
<svg style="position:absolute;left:3760px;top:208px;" width="16" height="44" viewBox="0 0 16 44" fill="none"><circle cx="8" cy="9" r="3.2" fill="#6C707E"/><circle cx="8" cy="22" r="3.2" fill="#6C707E"/><circle cx="8" cy="35" r="3.2" fill="#6C707E"/></svg>
<svg style="position:absolute;left:1110px;top:314px;" width="40" height="36" viewBox="0 0 40 36" fill="none"><rect x="2.5" y="4" width="35" height="20.5" fill="#AAB5BD"/><rect x="17.5" y="24.5" width="5" height="3" fill="#AAB5BD"/><rect x="13" y="27.5" width="14" height="2" fill="#C5CCD2"/></svg>
<div class="t" style="left:1157.57px;top:314.07px;font-size:33.7px;line-height:33.7px;color:#1A1A1A;font-weight:400;">Views</div>
<svg style="position:absolute;left:1300px;top:310px;" width="36" height="40" viewBox="0 0 36 40" fill="none"><path d="M14 1 H33 L22 15 H31 L6 39 L13 22 H3 Z" fill="#F2BC58"/></svg>
<div class="t" style="left:1342.16px;top:313.73px;font-size:34.1px;line-height:34.1px;color:#1A1A1A;font-weight:400;transform:scaleX(1.017);transform-origin:0 0;">Event Listeners</div>
<svg style="position:absolute;left:1632px;top:310px;" width="40" height="40" viewBox="0 0 40 40" fill="none"><circle cx="20" cy="20" r="16.5" stroke="#E55765" stroke-width="3"/><path d="M12 27 V16 M12 19 Q12 15 15.5 15 Q19 15 19 19 V27 M19 19 Q19 15 22.5 15 Q26 15 26 19 V27" stroke="#E55765" stroke-width="2.6" stroke-linecap="round"/></svg>
<div class="t" style="left:1675.12px;top:313.31px;font-size:34.6px;line-height:34.6px;color:#1A1A1A;font-weight:400;transform:scaleX(1.014);transform-origin:0 0;">Lifecycle Callbacks</div>
<svg style="position:absolute;left:1090px;top:412px;" width="24" height="15" viewBox="0 0 24 15" fill="none"><path d="M2 2 L12.0 13 L22 2" stroke="#8A8E99" stroke-width="2.4" stroke-linecap="round" stroke-linejoin="round"/></svg>
<div class="t" style="left:1129.85px;top:402.54px;font-size:34.8px;line-height:34.8px;color:#1A1A1A;font-weight:400;">Hide properties</div>
<div style="left:1382px;top:420px;width:1033px;height:2px;background:#EBECF0;"></div>
<div class="t" style="left:1088.81px;top:478.82px;font-size:34px;line-height:34px;color:#1A1A1A;font-weight:400;">Package</div>
<div style="left:1295px;top:461px;width:366px;height:64px;background:#F7F8FA;border:2px solid #DFE1E5;border-radius:12px"></div>
<div class="t" style="left:1318px;top:478.8px;width:280px;overflow:hidden;font-size:34px;line-height:34px;color:#000">com.company.projectmanagement</div>
<div style="left:1570px;top:470px;width:30px;height:50px;background:linear-gradient(90deg,rgba(247,248,250,0),#F7F8FA)"></div>
<svg style="position:absolute;left:1612px;top:477px;" width="34" height="34" viewBox="0 0 34 34" fill="none"><path d="M3.06 31.62 L3.4000000000000004 24.48 L23.12 4.760000000000001 Q26.18 1.7000000000000002 29.24 4.760000000000001 Q32.3 7.82 29.24 10.88 L9.520000000000001 30.94 Z M19.72 8.16 L25.84 14.28" stroke="#B4B8C2" stroke-width="2.6" stroke-linejoin="round"/></svg>
<div class="t" style="left:1687.27px;top:478.22px;font-size:34px;line-height:34px;color:#1A1A1A;font-weight:400;">Class</div>
<div style="left:1934px;top:461px;width:469px;height:64px;background:#F7F8FA;border:2px solid #DFE1E5;border-radius:12px"></div>
<div class="t" style="left:1953.81px;top:478.22px;font-size:34px;line-height:34px;color:#1A1A1A;font-weight:400;">Project</div>
<svg style="position:absolute;left:2353px;top:477px;" width="34" height="34" viewBox="0 0 34 34" fill="none"><path d="M3.06 31.62 L3.4000000000000004 24.48 L23.12 4.760000000000001 Q26.18 1.7000000000000002 29.24 4.760000000000001 Q32.3 7.82 29.24 10.88 L9.520000000000001 30.94 Z M19.72 8.16 L25.84 14.28" stroke="#B4B8C2" stroke-width="2.6" stroke-linejoin="round"/></svg>
<div class="t" style="left:1088.81px;top:570.72px;font-size:34px;line-height:34px;color:#1A1A1A;font-weight:400;">Entity name</div>
<div style="left:1295px;top:553px;width:311px;height:64px;background:#F7F8FA;border:2px solid #DFE1E5;border-radius:12px"></div>
<div class="t" style="left:1315.21px;top:570.72px;font-size:34px;line-height:34px;color:#1A1A1A;font-weight:400;">Project</div>
<svg style="position:absolute;left:1625px;top:572px;" width="30" height="30" viewBox="0 0 30 30" fill="none"><circle cx="15.0" cy="15.0" r="14.0" fill="#A9B3BC"/><path d="M15.0 2 V28 M2 15.0 H28 M8.25 4 Q3.0 15.0 8.25 26 M21.75 4 Q27.0 15.0 21.75 26" stroke="#F7F8FA" stroke-width="1.6"/></svg>
<div class="t" style="left:1685.87px;top:570.22px;font-size:34px;line-height:34px;color:#1A1A1A;font-weight:400;">Instance name</div>
<div style="left:1934px;top:552px;width:415px;height:65px;background:#FFFFFF;border:2px solid #C9CCD6;border-radius:12px"></div>
<div class="t" style="left:1952.76px;top:570.22px;font-size:34px;line-height:34px;color:#1A1A1A;font-weight:400;">name</div>
<svg style="position:absolute;left:2306px;top:580px;" width="24" height="15" viewBox="0 0 24 15" fill="none"><path d="M2 2 L12.0 13 L22 2" stroke="#6C707E" stroke-width="2.6" stroke-linecap="round" stroke-linejoin="round"/></svg>
<svg style="position:absolute;left:2364px;top:569px;" width="36" height="36" viewBox="0 0 36 36" fill="none"><path d="M3.2399999999999998 33.480000000000004 L3.6 25.919999999999998 L24.48 5.040000000000001 Q27.72 1.8 30.96 5.040000000000001 Q34.199999999999996 8.280000000000001 30.96 11.52 L10.080000000000002 32.76 Z M20.88 8.64 L27.36 15.12" stroke="#6C707E" stroke-width="2.6" stroke-linejoin="round"/></svg>
<div class="t" style="left:1090.85px;top:663.22px;font-size:34px;line-height:34px;color:#1A1A1A;font-weight:400;">Table</div>
<div style="left:1295px;top:645px;width:366px;height:67px;background:#FFFFFF;border:2px solid #EBECF0;border-radius:3px"></div>
<div class="t" style="left:1309.94px;top:663.22px;font-size:34px;line-height:34px;color:#1A1A1A;font-weight:400;transform:scaleX(0.918);transform-origin:0 0;">PROJECT</div>
<div style="left:1688px;top:660px;width:35px;height:35px;border:2px solid #C9CCD6;border-radius:8px;background:#FFFFFF"></div>
<div class="t" style="left:1745.91px;top:663.22px;font-size:34px;line-height:34px;color:#1A1A1A;font-weight:400;">DB view</div>
<div class="t" style="left:1931.80px;top:663.13px;font-size:34.1px;line-height:34.1px;color:#3A67CB;font-weight:400;">DDL Generation Settings</div>
<div class="t" style="left:1088.81px;top:759.62px;font-size:34px;line-height:34px;color:#1A1A1A;font-weight:400;">Parent</div>
<div style="left:1295px;top:741px;width:1108px;height:64px;background:#FFFFFF;border:2px solid #C9CCD6;border-radius:12px"></div>
<svg style="position:absolute;left:2359px;top:768px;" width="25" height="15" viewBox="0 0 25 15" fill="none"><path d="M2 2 L12.5 13 L23 2" stroke="#6C707E" stroke-width="2.6" stroke-linecap="round" stroke-linejoin="round"/></svg>
<div class="t" style="left:1090.85px;top:857.02px;font-size:34px;line-height:34px;color:#1A1A1A;font-weight:400;">Traits</div>
<div class="t" style="left:1292.21px;top:857.02px;font-size:34px;line-height:34px;color:#3A67CB;font-weight:400;">Has UUID</div>
<div class="t" style="left:1088.38px;top:934.92px;font-size:34px;line-height:34px;color:#1A1A1A;font-weight:400;transform:scaleX(1.03);transform-origin:0 0;">Inheritance</div>
<div style="left:1295px;top:917px;width:1108px;height:64px;background:#FFFFFF;border:2px solid #C9CCD6;border-radius:12px"></div>
<div class="t" style="left:1312.33px;top:936.10px;font-size:32.6px;line-height:32.6px;color:#8C8C8C;font-weight:400;">Default (SINGLE_TABLE)</div>
<svg style="position:absolute;left:2359px;top:944px;" width="25" height="15" viewBox="0 0 25 15" fill="none"><path d="M2 2 L12.5 13 L23 2" stroke="#6C707E" stroke-width="2.6" stroke-linecap="round" stroke-linejoin="round"/></svg>
<div class="t" style="left:1089.87px;top:1010.22px;font-size:34px;line-height:34px;color:#1A1A1A;font-weight:400;">Comment</div>
<div class="t" style="left:1293.57px;top:1010.22px;font-size:34px;line-height:34px;color:#3A67CB;font-weight:400;">edit</div>
<div class="t" style="left:1083.67px;top:1081.47px;font-size:33px;line-height:33px;color:#1A1A1A;font-weight:700;">Attributes</div>
<div style="left:1082px;top:1140px;width:1329px;height:845px;border:2px solid #EBECF0"></div>
<div style="left:1084px;top:1212px;width:1329px;height:2px;background:#EBECF0;"></div>
<div style="left:1993px;top:1142px;width:420px;height:70px;background:#FFFFFF;"></div>
<svg style="position:absolute;left:2008px;top:1156px;" width="48" height="40" viewBox="0 0 48 40" fill="none"><circle cx="16" cy="16" r="11" stroke="#6C707E" stroke-width="2.6"/><path d="M24 24 L31 31" stroke="#6C707E" stroke-width="2.6" stroke-linecap="round"/><path d="M33 13 H43 L38 18 Z" fill="#6C707E"/></svg>
<svg style="position:absolute;left:1098px;top:1156px;" width="38" height="38" viewBox="0 0 38 38" fill="none"><path d="M18 3 V34 M3 18 H34" stroke="#6C707E" stroke-width="2.6"/></svg>
<svg style="position:absolute;left:1168px;top:1154px;" width="38" height="40" viewBox="0 0 38 40" fill="none"><rect x="4" y="10" width="23" height="27" rx="3.5" stroke="#7A7E8A" stroke-width="2.4"/><path d="M9 9.5 Q9.5 5 14 5 H26 Q31.5 5 31.5 10.5 V27 Q31.5 31 28 31.5" stroke="#8C909C" stroke-width="2.2"/><path d="M13.5 2.5 H28 Q34.5 2.5 34.5 9 V25" stroke="#A0A4AE" stroke-width="1.8"/><path d="M10.5 18 H20.5 M10.5 23 H20.5 M10.5 28 H20.5" stroke="#7A7E8A" stroke-width="2.2"/></svg>
<svg style="position:absolute;left:1233px;top:1156px;" width="42" height="40" viewBox="0 0 42 40" fill="none"><rect x="3.5" y="3.5" width="33" height="27" rx="3.5" stroke="#747474" stroke-width="2.4"/><rect x="3.5" y="3.5" width="33" height="7" rx="2" fill="#747474"/><circle cx="9" cy="7" r="1.2" fill="#F7F8FA"/><circle cx="13" cy="7" r="1.2" fill="#F7F8FA"/><circle cx="17" cy="7" r="1.2" fill="#F7F8FA"/><circle cx="28.5" cy="29" r="10" fill="#6E6E6E" stroke="#F7F8FA" stroke-width="1.5"/><path d="M31 23.5 Q28.3 22.8 28.3 25.5 V35 M25.8 28.3 H30.8" stroke="#FFFFFF" stroke-width="2"/></svg>
<svg style="position:absolute;left:1302px;top:1166px;" width="38" height="16" viewBox="0 0 38 16" fill="none"><path d="M2.5 8 H35" stroke="#6C707E" stroke-width="2.4" stroke-linecap="round"/></svg>
<svg style="position:absolute;left:1372px;top:1160px;" width="36" height="34" viewBox="0 0 36 34" fill="none"><path d="M17.5 4 V26 M7 13.5 L17.5 3.5 L28 13.5 M3 31 H32" stroke="#C5C8CF" stroke-width="2.4"/></svg>
<svg style="position:absolute;left:1440px;top:1158px;" width="36" height="36" viewBox="0 0 36 36" fill="none"><path d="M2 3.5 H31 M16.5 9 V31 M7 22 L16.5 31.5 L26 22" stroke="#7F8494" stroke-width="2.4"/></svg>
<svg style="position:absolute;left:1503px;top:1158px;" width="46" height="34" viewBox="0 0 46 34" fill="none"><path d="M3 17 Q23 -3 43 17 Q23 37 3 17 Z" stroke="#7F8494" stroke-width="2.4" stroke-linejoin="round"/><circle cx="23" cy="17" r="6" stroke="#7F8494" stroke-width="2.4"/></svg>
<div style="left:1527px;top:1216px;width:2px;height:55px;background:#EBECF0;"></div>
<div style="left:1971px;top:1216px;width:2px;height:55px;background:#EBECF0;"></div>
<div class="t" style="left:1102.76px;top:1227.22px;font-size:34px;line-height:34px;color:#1A1A1A;font-weight:400;">name</div>
<div class="t" style="left:1548.09px;top:1227.22px;font-size:34px;line-height:34px;color:#1A1A1A;font-weight:400;">type</div>
<div class="t" style="left:1991.57px;top:1226.72px;font-size:34px;line-height:34px;color:#1A1A1A;font-weight:400;">column</div>
<div style="left:1084px;top:1275px;width:1329px;height:61px;background:#D5E1FF;"></div>
<div style="left:1526px;top:1275px;width:2px;height:61px;background:#F0F3FA;"></div>
<div style="left:1970px;top:1275px;width:2px;height:61px;background:#F0F3FA;"></div>
<div class="t" style="left:1088.72px;top:1288.72px;font-size:34px;line-height:34px;color:#1A1A1A;font-weight:400;">id</div>
<div class="t" style="left:1533.28px;top:1288.72px;font-size:34px;line-height:34px;color:#1A1A1A;font-weight:400;transform:scaleX(0.926);transform-origin:0 0;">UUID</div>
<div class="t" style="left:1976.52px;top:1288.72px;font-size:34px;line-height:34px;color:#1A1A1A;font-weight:400;transform:scaleX(0.92);transform-origin:0 0;">ID</div>
<div style="left:1084px;top:1336px;width:1329px;height:2px;background:#EBECF0;"></div>
<div style="left:1526px;top:1337px;width:2px;height:62px;background:#EBECF0;"></div>
<div style="left:1970px;top:1337px;width:2px;height:62px;background:#EBECF0;"></div>
<div class="t" style="left:1088.76px;top:1351.22px;font-size:34px;line-height:34px;color:#1A1A1A;font-weight:400;">name</div>
<div class="t" style="left:1534.17px;top:1351.22px;font-size:34px;line-height:34px;color:#1A1A1A;font-weight:400;">String</div>
<div class="t" style="left:1976.79px;top:1351.22px;font-size:34px;line-height:34px;color:#1A1A1A;font-weight:400;transform:scaleX(0.936);transform-origin:0 0;">NAME</div>
<div style="left:1084px;top:1398px;width:1329px;height:2px;background:#EBECF0;"></div>
<div style="left:1526px;top:1399px;width:2px;height:62px;background:#EBECF0;"></div>
<div style="left:1970px;top:1399px;width:2px;height:62px;background:#EBECF0;"></div>
<div class="t" style="left:1088.76px;top:1414.52px;font-size:34px;line-height:34px;color:#1A1A1A;font-weight:400;">manager</div>
<div class="t" style="left:1533.08px;top:1414.52px;font-size:34px;line-height:34px;color:#1A1A1A;font-weight:400;">User</div>
<div class="t" style="left:1976.86px;top:1414.52px;font-size:34px;line-height:34px;color:#1A1A1A;font-weight:400;transform:scaleX(0.912);transform-origin:0 0;">MANAGER_ID</div>
<div style="left:1084px;top:1460px;width:1329px;height:2px;background:#EBECF0;"></div>
<div style="left:1526px;top:1461px;width:2px;height:62px;background:#EBECF0;"></div>
<div style="left:1970px;top:1461px;width:2px;height:62px;background:#EBECF0;"></div>
<div class="t" style="left:1089.57px;top:1475.82px;font-size:34px;line-height:34px;color:#1A1A1A;font-weight:400;">customer</div>
<div class="t" style="left:1534.17px;top:1475.82px;font-size:34px;line-height:34px;color:#1A1A1A;font-weight:400;">String</div>
<div class="t" style="left:1977.78px;top:1475.82px;font-size:34px;line-height:34px;color:#1A1A1A;font-weight:400;transform:scaleX(0.933);transform-origin:0 0;">CUSTOMER</div>
<div style="left:1084px;top:1522px;width:1329px;height:2px;background:#EBECF0;"></div>
<div style="left:1526px;top:1523px;width:2px;height:62px;background:#EBECF0;"></div>
<div style="left:1970px;top:1523px;width:2px;height:62px;background:#EBECF0;"></div>
<div class="t" style="left:1090.05px;top:1537.22px;font-size:34px;line-height:34px;color:#1A1A1A;font-weight:400;">startDate</div>
<div class="t" style="left:1532.91px;top:1537.22px;font-size:34px;line-height:34px;color:#1A1A1A;font-weight:400;">LocalDate</div>
<div class="t" style="left:1977.96px;top:1537.22px;font-size:34px;line-height:34px;color:#1A1A1A;font-weight:400;transform:scaleX(0.938);transform-origin:0 0;">START_DATE</div>
<div style="left:1084px;top:1584px;width:1329px;height:2px;background:#EBECF0;"></div>
<div style="left:1526px;top:1585px;width:2px;height:62px;background:#EBECF0;"></div>
<div style="left:1970px;top:1585px;width:2px;height:62px;background:#EBECF0;"></div>
<div class="t" style="left:1089.57px;top:1599.22px;font-size:34px;line-height:34px;color:#1A1A1A;font-weight:400;">endDate</div>
<div class="t" style="left:1532.91px;top:1599.22px;font-size:34px;line-height:34px;color:#1A1A1A;font-weight:400;">LocalDate</div>
<div class="t" style="left:1976.83px;top:1599.22px;font-size:34px;line-height:34px;color:#1A1A1A;font-weight:400;transform:scaleX(0.923);transform-origin:0 0;">END_DATE</div>
<div style="left:1084px;top:1646px;width:1329px;height:2px;background:#EBECF0;"></div>
<div style="left:1526px;top:1647px;width:2px;height:62px;background:#EBECF0;"></div>
<div style="left:1970px;top:1647px;width:2px;height:62px;background:#EBECF0;"></div>
<div class="t" style="left:1090.49px;top:1661.22px;font-size:34px;line-height:34px;color:#1A1A1A;font-weight:400;">taskList</div>
<div class="t" style="left:1534.95px;top:1661.22px;font-size:34px;line-height:34px;color:#1A1A1A;font-weight:400;">Task_</div>
<div class="t" style="left:1979.40px;top:1661.22px;font-size:34px;line-height:34px;color:#1A1A1A;font-weight:400;"></div>
<div style="left:1084px;top:1708px;width:1329px;height:2px;background:#EBECF0;"></div>
<div class="t" style="left:1113.21px;top:2028.22px;font-size:34px;line-height:34px;color:#1A1A1A;font-weight:400;transform:scaleX(1.06);transform-origin:0 0;">Text</div>
<div class="t" style="left:1242.21px;top:2028.22px;font-size:34px;line-height:34px;color:#1A1A1A;font-weight:400;">Designer</div>
<div class="t" style="left:1441.81px;top:2028.22px;font-size:34px;line-height:34px;color:#1A1A1A;font-weight:400;transform:scaleX(1.02);transform-origin:0 0;">Indexes</div>
<div style="left:1212px;top:2071px;width:202px;height:8px;border-radius:4px 4px 0 0;background:#A5ABBB"></div>
<div class="t" style="left:2460.48px;top:408.22px;font-size:34px;line-height:34px;color:#1A1A1A;font-weight:400;transform:scaleX(1.062);transform-origin:0 0;">Id attribute</div>
<div class="t" style="left:2461.01px;top:486.22px;font-size:34px;line-height:34px;color:#1A1A1A;font-weight:400;">Name</div>
<div style="left:2755px;top:467px;width:928px;height:64px;background:#F7F8FA;border:2px solid #DFE1E5;border-radius:12px"></div>
<div class="t" style="left:2774.72px;top:486.22px;font-size:34px;line-height:34px;color:#1A1A1A;font-weight:400;">id</div>
<svg style="position:absolute;left:3700px;top:485px;" width="31" height="31" viewBox="0 0 31 31" fill="none"><circle cx="15.5" cy="15.5" r="14.5" fill="#A9B3BC"/><path d="M15.5 2 V29 M2 15.5 H29 M8.525 4 Q3.1 15.5 8.525 27 M22.475 4 Q27.9 15.5 22.475 27" stroke="#F7F8FA" stroke-width="1.6"/></svg>
<svg style="position:absolute;left:3752px;top:481px;" width="36" height="36" viewBox="0 0 36 36" fill="none"><path d="M3.2399999999999998 33.480000000000004 L3.6 25.919999999999998 L24.48 5.040000000000001 Q27.72 1.8 30.96 5.040000000000001 Q34.199999999999996 8.280000000000001 30.96 11.52 L10.080000000000002 32.76 Z M20.88 8.64 L27.36 15.12" stroke="#6C707E" stroke-width="2.6" stroke-linejoin="round"/></svg>
<div class="t" style="left:2463.73px;top:576.22px;font-size:34px;line-height:34px;color:#1A1A1A;font-weight:400;transform:scaleX(1.05);transform-origin:0 0;">Attribute type</div>
<div style="left:2755px;top:559px;width:1036px;height:64px;background:#F7F8FA;border:2px solid #DFE1E5;border-radius:12px"></div>
<div class="t" style="left:2770.27px;top:576.22px;font-size:34px;line-height:34px;color:#A8ADBD;font-weight:400;transform:scaleX(0.98);transform-origin:0 0;">DATATYPE</div>
<svg style="position:absolute;left:3748px;top:586px;" width="24" height="15" viewBox="0 0 24 15" fill="none"><path d="M2 2 L12.0 13 L22 2" stroke="#A8ADBD" stroke-width="2.6" stroke-linecap="round" stroke-linejoin="round"/></svg>
<div class="t" style="left:2463.05px;top:669.22px;font-size:34px;line-height:34px;color:#1A1A1A;font-weight:400;">Type</div>
<div style="left:2755px;top:651px;width:928px;height:64px;background:#F7F8FA;border:2px solid #DFE1E5;border-radius:12px"></div>
<div class="t" style="left:2772.58px;top:669.22px;font-size:34px;line-height:34px;color:#A8ADBD;font-weight:400;transform:scaleX(0.926);transform-origin:0 0;">UUID</div>
<svg style="position:absolute;left:3640px;top:678px;" width="24" height="15" viewBox="0 0 24 15" fill="none"><path d="M2 2 L12.0 13 L22 2" stroke="#A8ADBD" stroke-width="2.6" stroke-linecap="round" stroke-linejoin="round"/></svg>
<svg style="position:absolute;left:3698px;top:670px;" width="36" height="28" viewBox="0 0 36 28" fill="none"><path d="M3 14 H31 M21 4 L31 14 L21 24" stroke="#B4B8C2" stroke-width="2.6" stroke-linecap="round" stroke-linejoin="round"/></svg>
<svg style="position:absolute;left:3752px;top:666px;" width="36" height="36" viewBox="0 0 36 36" fill="none"><path d="M3.2399999999999998 33.480000000000004 L3.6 25.919999999999998 L24.48 5.040000000000001 Q27.72 1.8 30.96 5.040000000000001 Q34.199999999999996 8.280000000000001 30.96 11.52 L10.080000000000002 32.76 Z M20.88 8.64 L27.36 15.12" stroke="#B4B8C2" stroke-width="2.6" stroke-linejoin="round"/></svg>
<div class="t" style="left:2462.07px;top:761.22px;font-size:34px;line-height:34px;color:#1A1A1A;font-weight:400;">Column</div>
<div style="left:2755px;top:743px;width:1036px;height:68px;background:#FFFFFF;border:2px solid #EBECF0;border-radius:3px"></div>
<div class="t" style="left:2770.12px;top:761.22px;font-size:34px;line-height:34px;color:#1A1A1A;font-weight:400;transform:scaleX(0.92);transform-origin:0 0;">ID</div>
<div class="t" style="left:2462.02px;top:854.22px;font-size:34px;line-height:34px;color:#1A1A1A;font-weight:400;transform:scaleX(1.027);transform-origin:0 0;">Column definition</div>
<div style="left:2755px;top:838px;width:1036px;height:65px;background:#FFFFFF;border:2px solid #C9CCD6;border-radius:12px"></div>
<div class="t" style="left:2462.07px;top:933.22px;font-size:34px;line-height:34px;color:#1A1A1A;font-weight:400;">Comment</div>
<div class="t" style="left:2753.57px;top:933.22px;font-size:34px;line-height:34px;color:#3A67CB;font-weight:400;">edit</div>
<svg style="position:absolute;left:3846px;top:200px;" width="50" height="54" viewBox="0 0 50 54" fill="none"><path d="M27.5 6.9 Q11 6 10.6 20 V27.3 L4.5 37.5 Q3.2 40.5 6.5 40.5 H40 Q43.5 40.5 42 37.5 L35.7 28.5 V23" stroke="#6C707E" stroke-width="3.1" stroke-linecap="round" stroke-linejoin="round"/><path d="M18.5 46 H28 Q27 51 23.2 51 Q19.5 51 18.5 46 Z" fill="#6C707E"/></svg>
<svg style="position:absolute;left:3876px;top:202px;" width="18" height="18" viewBox="0 0 18 18" fill="none"><circle cx="9.2" cy="8.8" r="8.75" fill="#548AF7"/></svg>
<svg style="position:absolute;left:3846px;top:304px;" width="52" height="50" viewBox="0 0 52 50" fill="none"><path d="M6.5 7.4 Q24 0 41.5 18.4" stroke="#6C707E" stroke-width="3.1" stroke-linecap="round"/><path d="M31 17.9 Q18 9 8 17 Q1 26 8 34 Q12 38.5 18.8 40.6" stroke="#6C707E" stroke-width="3.1" stroke-linecap="round"/><path d="M21.7 20.8 Q14 21 14.1 26 Q14.5 29.5 18.2 31.3" stroke="#6C707E" stroke-width="3.1" stroke-linecap="round"/><path d="M28 23.1 H43.3 Q47.3 23.1 47.3 27.1 V46.5 L41 42 H28 Q24 42 24 38 V27.1 Q24 23.1 28 23.1 Z" stroke="#6C707E" stroke-width="3.1" stroke-linejoin="round"/></svg>
<svg style="position:absolute;left:3843px;top:406px;" width="54" height="44" viewBox="0 0 54 44" fill="none"><path d="M38.7 5.3 Q43 1 48 4.5 Q52 9 49.2 17 Q46 22 41 25.2 Q37 29 36.5 33 L36.3 37.5 Q33 40 30.5 37.5 Q28 33 25.8 33 Q23 33 20.5 37.5 Q17.5 40 14.8 37 Q13 33 10.5 33 Q8 33 6 37 Q4 39.5 2 37.5 Q1.5 30 4 24 Q6 19 10 16" stroke="#6C707E" stroke-width="3.1" stroke-linecap="round" stroke-linejoin="round"/><path d="M10.5 12 Q22 6 36 12 Q42 15 48 11" stroke="#6C707E" stroke-width="3.1" stroke-linecap="round"/><path d="M10.7 12.5 Q11 23 14 23 Q19 23.5 24.7 19.5" stroke="#6C707E" stroke-width="3.1" stroke-linecap="round"/><circle cx="32.3" cy="19.3" r="1.9" fill="#6C707E"/></svg>
<svg style="position:absolute;left:3845px;top:502px;" width="50" height="50" viewBox="0 0 50 50" fill="none"><path d="M12.2 14.4 L21 5.7 Q23.8 3 26.6 5.7 L30.8 9.9 M34.3 13.4 L42 21.1 Q44.8 24.9 42 28.7 L40.2 30.5 M37 33.7 L26.6 44.1 Q23.8 46.9 21 44.1 L16.8 39.9 M13.9 36.9 L5.6 28.7 Q2.8 24.9 5.6 21.1 L8.3 18.4" stroke="#6C707E" stroke-width="3.1" stroke-linecap="round" stroke-linejoin="round"/><path d="M14.5 31 L19.8 18.6 L25 31 M16.3 27 H23.3 M31.4 18.6 V31" stroke="#6C707E" stroke-width="3.1" stroke-linejoin="round"/></svg>
<div class="t" style="left:147.15px;top:2100.63px;font-size:34.7px;line-height:34.7px;color:#6C707E;font-weight:400;">Hot deploy: /Users/admin/IdeaProjects/project-management/src/main/resources/com/company/projectmanagement/view/project/project-detail-view.xml -&gt; .jmix/conf (05.12.2025, 13:17)</div>
<svg style="position:absolute;left:3840px;top:2098px;" width="38" height="38" viewBox="0 0 38 38" fill="none"><rect x="3" y="17" width="24" height="18" rx="3" stroke="#6C707E" stroke-width="2.8"/><path d="M19 17 V11 Q19 4 26 4 Q33 4 33 11 V14" stroke="#6C707E" stroke-width="2.8" stroke-linecap="round"/><path d="M15 24 V28" stroke="#6C707E" stroke-width="2.8" stroke-linecap="round"/></svg>
</div></body></html>
